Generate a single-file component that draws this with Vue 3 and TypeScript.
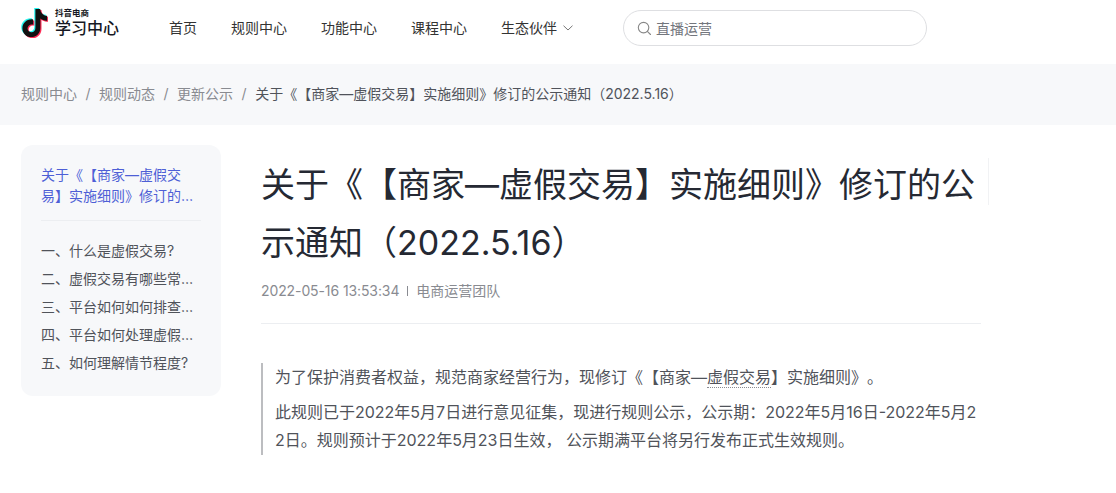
<template>
  <div class="page">
    <header class="top">
      <div class="logo">
        <svg class="logo-mark" viewBox="1 0 30 33.500" width="27" height="30">
          <path :d="note" fill="#25f4ee" transform="translate(-1.3 -1.2)" />
          <path :d="note" fill="#fe2c55" transform="translate(1.3 1.2)" />
          <path :d="note" fill="#111" />
        </svg>
        <div class="logo-text">
          <span class="logo-sub">抖音电商</span>
          <span class="logo-main">学习中心</span>
        </div>
      </div>
      <nav class="nav">
        <a v-for="item in navItems" :key="item" class="nav-item">{{ item }}</a>
        <a class="nav-item nav-more">
          生态伙伴
          <svg viewBox="0 0 10 6" width="10" height="6">
            <path d="M.5.7 5 5l4.500-4.300" fill="none" stroke="#777" stroke-width="1" />
          </svg>
        </a>
      </nav>
      <div class="search">
        <svg viewBox="0 0 16 16" width="15" height="15">
          <circle cx="7" cy="7" r="5.600" fill="none" stroke="#888" stroke-width="1.200" />
          <path d="m11 11 3.400 3.400" fill="none" stroke="#888" stroke-width="1.200" stroke-linecap="round" />
        </svg>
        <span>直播运营</span>
      </div>
    </header>

    <div class="crumbs">
      <template v-for="c in crumbs" :key="c">
        <span class="crumb">{{ c }}</span>
        <span class="sep">/</span>
      </template>
      <span class="crumb current">{{ pageTitle }}</span>
    </div>

    <main class="content">
      <aside class="toc">
        <div class="toc-title">{{ pageTitle }}</div>
        <div class="toc-line"></div>
        <div v-for="h in headings" :key="h" class="toc-item">{{ h }}</div>
      </aside>
      <article class="article">
        <h1 class="title">{{ pageTitle }}</h1>
        <div class="meta">
          <span class="meta-date">2022-05-16 13:53:34</span>
          <i class="meta-sep"></i>
          <span>电商运营团队</span>
        </div>
        <div class="rule"></div>
        <blockquote class="quote">
          <p>为了保护消费者权益，规范商家经营行为，现修订《【商家—<span class="dotted">虚假交易</span>】实施细则》。</p>
          <p>此规则已于2022年5月7日进行意见征集，现进行规则公示，公示期：2022年5月16日-2022年5月22日。规则预计于2022年5月23日生效， 公示期满平台将另行发布正式生效规则。</p>
        </blockquote>
      </article>
      <i class="title-mark"></i>
    </main>
  </div>
</template>

<script setup lang="ts">
const note =
  'M17 1h5.400c.4 4.400 3 7.300 7.600 7.700v5.500c-2.800.1-5.300-.8-7.500-2.400v10.400c0 6.200-4.700 10.300-10.200 10.300C6.700 32.500 2.500 28 2.500 22.800c0-6.200 5.400-11 12-10v5.700c-3.300-.9-6.300 1.200-6.300 4.300 0 2.500 2 4.300 4.400 4.300 2.700 0 4.400-1.900 4.400-4.700V1z'
const navItems: string[] = ['首页', '规则中心', '功能中心', '课程中心']
const crumbs: string[] = ['规则中心', '规则动态', '更新公示']
const pageTitle = '关于《【商家—虚假交易】实施细则》修订的公示通知（2022.5.16）'
const headings: string[] = [
  '一、什么是虚假交易?',
  '二、虚假交易有哪些常见情形?',
  '三、平台如何如何排查虚假交易?',
  '四、平台如何处理虚假交易行为?',
  '五、如何理解情节程度?'
]
</script>

<style>
html,
body {
  margin: 0;
  background: #fff;
  overflow: hidden;
}
</style>

<style scoped>
.page {
  width: 1116px;
  height: 493px;
  overflow: hidden;
  background: #fff;
  font-family: Inter, "Noto Sans CJK SC", sans-serif;
  font-size: 14px;
  color: #252933;
  text-spacing-trim: space-all;
}

.top {
  display: flex;
  align-items: center;
  height: 64px;
  padding: 0 0 8px 21px;
  box-sizing: border-box;
}

.logo {
  display: flex;
  align-items: center;
  width: 148px;
  gap: 7px;
  margin-bottom: 10px;
}

.logo-mark {
  flex: none;
}

.logo-text {
  display: flex;
  flex-direction: column;
}

.logo-sub {
  font-size: 8.500px;
  line-height: 10px;
  font-weight: 700;
  color: #161823;
}

.logo-main {
  font-size: 16px;
  line-height: 20px;
  font-weight: 500;
  color: #161823;
}

.nav {
  display: flex;
  align-items: center;
  gap: 34px;
  margin-bottom: 1px;
}

.nav-item {
  line-height: 20px;
  color: #333;
}

.nav-more {
  display: flex;
  align-items: center;
  gap: 6px;
  width: 72px;
}

.search {
  display: flex;
  align-items: center;
  gap: 4px;
  width: 304px;
  height: 36px;
  margin-left: 50px;
  padding-left: 13px;
  box-sizing: border-box;
  border: 1px solid #dedfe2;
  border-radius: 18px;
  color: #73767d;
}

.crumbs {
  display: flex;
  align-items: center;
  height: 61px;
  padding: 0 0 3px 21px;
  box-sizing: border-box;
  background: #f7f8fa;
  color: #898b91;
  white-space: nowrap;
}

.current {
  color: #50535a;
}

.sep {
  margin: 0 8.500px;
  color: #898b91;
}

.content {
  position: relative;
  display: flex;
  align-items: flex-start;
  gap: 40px;
  padding: 20px 0 0 21px;
}

.toc {
  width: 200px;
  padding: 19px 20px 19px;
  box-sizing: border-box;
  flex: none;
  background: #f7f8fa;
  border-radius: 12px;
}

.toc-title {
  display: -webkit-box;
  -webkit-box-orient: vertical;
  -webkit-line-clamp: 2;
  overflow: hidden;
  line-height: 21px;
  color: #4e5fd6;
}

.toc-line {
  height: 1px;
  margin: 14px 0 16px;
  background: #eceef1;
}

.toc-item {
  overflow: hidden;
  height: 28px;
  line-height: 28px;
  color: #50535a;
  white-space: nowrap;
  text-overflow: ellipsis;
}

.article {
  width: 720px;
  flex: none;
}

.title {
  margin: 11px 0 0;
  font-size: 34px;
  line-height: 58px;
  font-weight: 400;
  color: #252933;
}

.meta {
  display: flex;
  align-items: center;
  margin-top: 9px;
  line-height: 20px;
  color: #898b91;
}

.meta-date {
  letter-spacing: -0.1px;
}

.meta-sep {
  width: 1px;
  height: 10px;
  margin: 0 8px;
  background: #898b91;
}

.rule {
  height: 1px;
  margin-top: 22px;
  background: #eceef1;
}

.quote {
  margin: 39px 0 0;
  padding: 0 0 1px 12px;
  border-left: 2px solid #bcbdc0;
  font-size: 16px;
  line-height: 28px;
  color: #50535a;
  word-break: break-all;
}

.quote p {
  margin: 0 0 7px;
}

.quote p:last-child {
  margin-bottom: 0;
}

.dotted {
  border-bottom: 1px dotted #898b91;
}

.title-mark {
  position: absolute;
  left: 988px;
  top: 33px;
  width: 1px;
  height: 47px;
  background: #f1f2f4;
}
</style>
